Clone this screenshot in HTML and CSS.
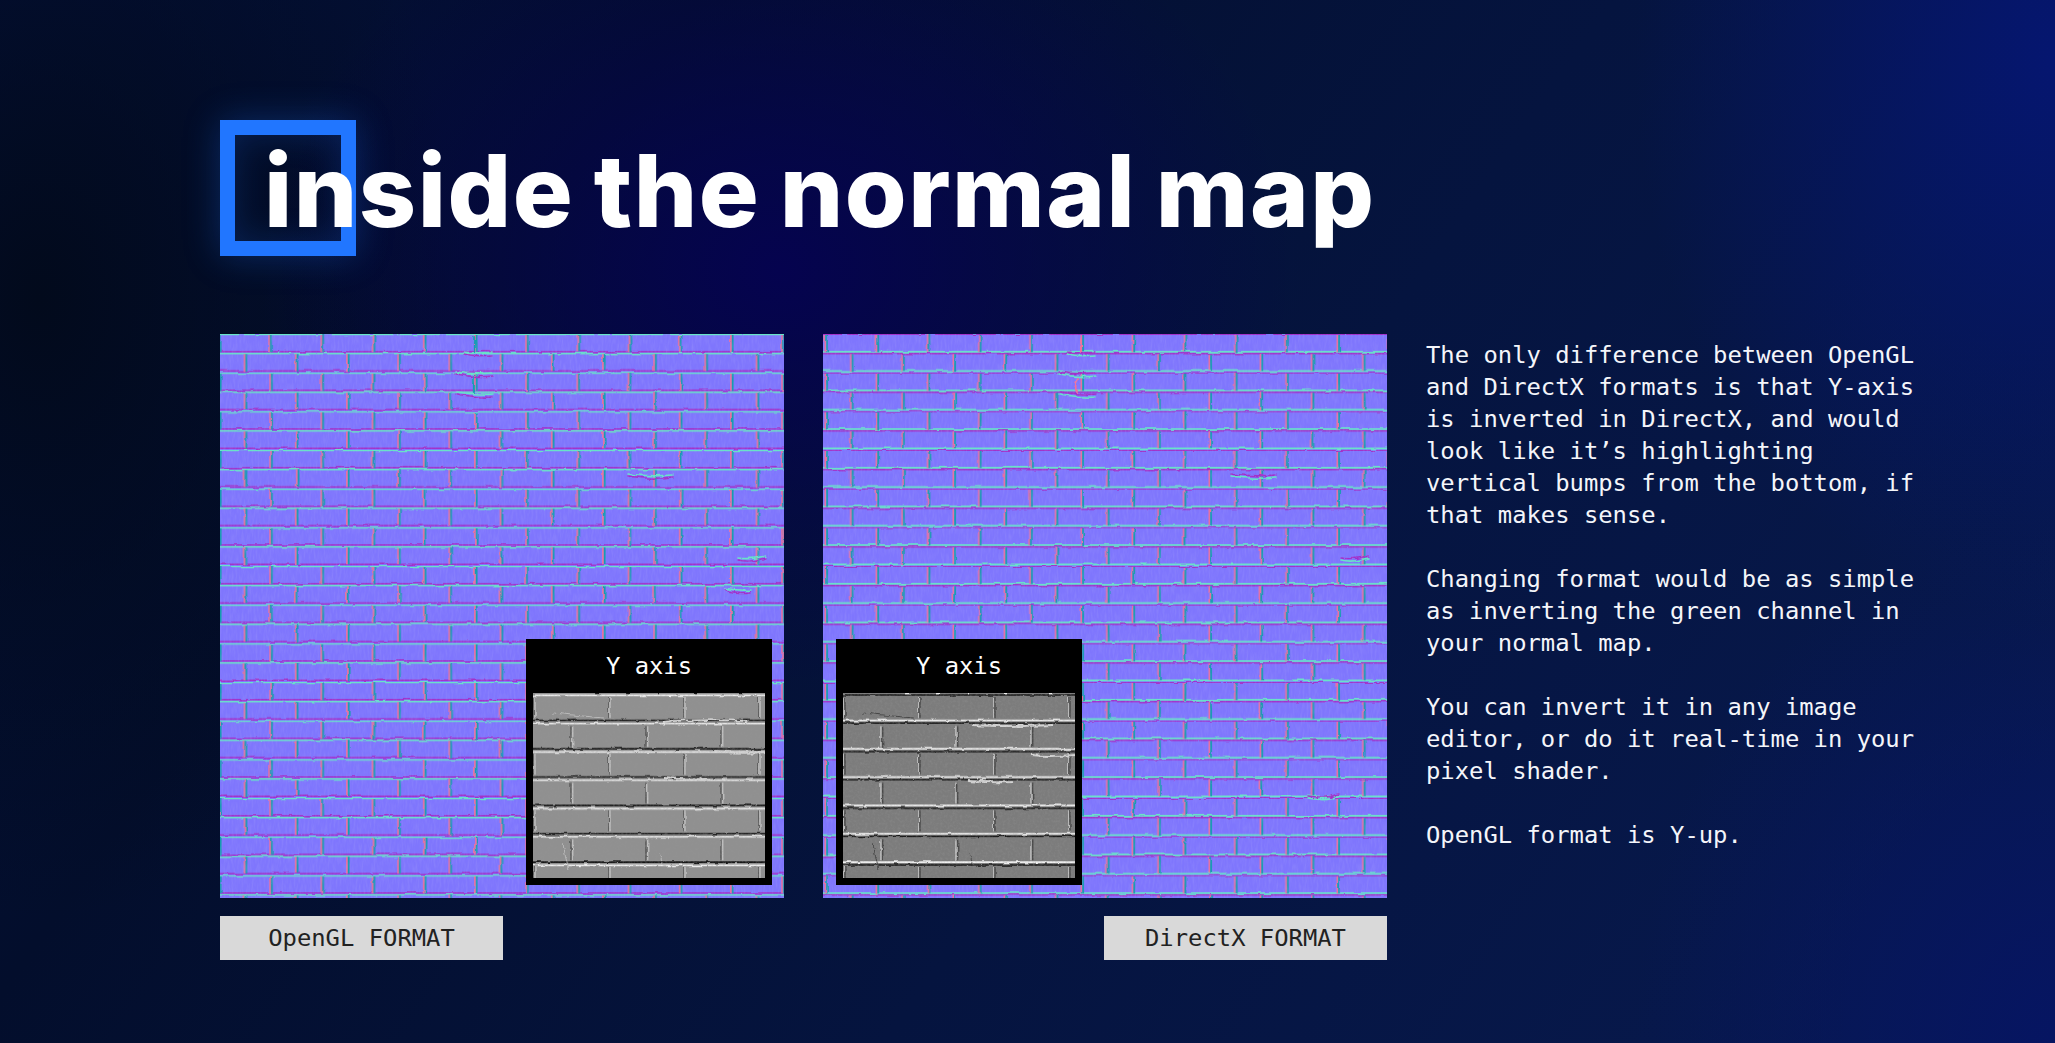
FILE: index.html
```html
<!DOCTYPE html>
<html lang="en">
<head>
<meta charset="utf-8">
<title>inside the normal map</title>
<link rel="stylesheet" href="styles.css">
</head>
<body>
<svg class="defs" aria-hidden="true">
  <defs>
    <filter id="rough" x="0" y="0" width="100%" height="100%">
      <feTurbulence type="fractalNoise" baseFrequency="0.07" numOctaves="3" seed="4" result="n"/>
      <feDisplacementMap in="SourceGraphic" in2="n" scale="3" xChannelSelector="R" yChannelSelector="G"/>
      <feGaussianBlur stdDeviation="0.3"/>
    </filter>
    <filter id="rough-blob" x="-5%" y="-5%" width="110%" height="110%">
      <feTurbulence type="fractalNoise" baseFrequency="0.12" numOctaves="3" seed="7" result="n"/>
      <feDisplacementMap in="SourceGraphic" in2="n" scale="5" xChannelSelector="R" yChannelSelector="G"/>
      <feGaussianBlur stdDeviation="0.4"/>
    </filter>
    <filter id="grain" x="0" y="0" width="100%" height="100%">
      <feTurbulence type="fractalNoise" baseFrequency="0.5 0.1" numOctaves="2" seed="9"/>
      <feColorMatrix values="0 0 0 0 0.42  0 0 0 0 0.4  0 0 0 0 0.95  1.4 0 0 0 -0.55"/>
    </filter>
    <filter id="grain-grey" x="0" y="0" width="100%" height="100%">
      <feTurbulence type="fractalNoise" baseFrequency="0.4" numOctaves="3" seed="3"/>
      <feColorMatrix values="0 0 0 0 0.3  0 0 0 0 0.3  0 0 0 0 0.3  1.5 0 0 0 -0.6"/>
    </filter>
    <filter id="rough-grey" x="0" y="0" width="100%" height="100%">
      <feTurbulence type="fractalNoise" baseFrequency="0.1" numOctaves="3" seed="12" result="n"/>
      <feDisplacementMap in="SourceGraphic" in2="n" scale="3" xChannelSelector="R" yChannelSelector="G"/>
      <feGaussianBlur stdDeviation="0.4"/>
    </filter>

    <pattern id="bricks-gl" width="51.2" height="38.67" patternUnits="userSpaceOnUse">
      <rect width="51.2" height="38.67" fill="#7f76fd"/>
      <path d="M0 17.7H51.2M0 37H51.2" stroke="#a32fc8" stroke-width="1.5"/>
      <path d="M0 19.6H51.2M0 .3H51.2" stroke="#66e6c6" stroke-width="1.7"/>
      <path d="M-1 1V18M50.2 1V18M24.6 20V37" stroke="#f0709c" stroke-width="1.8"/>
      <path d="M.7 1V18M51.9 1V18M26.3 20V37" stroke="#159cb0" stroke-width="1.8"/>
    </pattern>

    <pattern id="bricks-dx" width="51.2" height="38.67" patternUnits="userSpaceOnUse">
      <rect width="51.2" height="38.67" fill="#7f76fd"/>
      <path d="M0 17.7H51.2M0 37H51.2" stroke="#66e6c6" stroke-width="1.7"/>
      <path d="M0 19.6H51.2M0 .3H51.2" stroke="#a32fc8" stroke-width="1.5"/>
      <path d="M2.4 1V18M53.6 1V18M28 20V37" stroke="#f0709c" stroke-width="1.8"/>
      <path d="M4.1 1V18M55.3 1V18M29.7 20V37" stroke="#159cb0" stroke-width="1.8"/>
    </pattern>

    <pattern id="grey-gl" width="75" height="56.67" patternUnits="userSpaceOnUse">
      <rect width="75" height="56.67" fill="#909090"/>
      <path d="M0 27.4H75M0 55.8H75" stroke="#161616" stroke-width="1.5"/>
      <path d="M0 30.6H75M0 2.4H75" stroke="#ececec" stroke-width="1.6"/>
      <path d="M.2 4V25M37.9 33V54" stroke="#5c5c5c" stroke-width="1.5"/>
      <path d="M2 4V25M39.7 33V54" stroke="#c0c0c0" stroke-width="1.5"/>
    </pattern>

    <pattern id="grey-dx" width="75" height="56.67" patternUnits="userSpaceOnUse">
      <rect width="75" height="56.67" fill="#7c7c7c"/>
      <path d="M0 27.4H75M0 55.8H75" stroke="#f2f2f2" stroke-width="1.7"/>
      <path d="M0 30H75M0 2H75" stroke="#121212" stroke-width="1.4"/>
      <path d="M.2 4V25M37.9 33V54" stroke="#c0c0c0" stroke-width="1.5"/>
      <path d="M2 4V25M39.7 33V54" stroke="#484848" stroke-width="1.5"/>
    </pattern>
  </defs>
</svg>

<header class="head">
  <span class="mark"></span>
  <h1 class="title">inside the normal map</h1>
</header>

<main class="content">
  <figure class="fig">
    <div class="tile">
      <svg class="art" viewBox="0 0 564 564">
        <rect x="-10" y="-10" width="584" height="584" fill="url(#bricks-gl)" filter="url(#rough)"/>
        <g fill="none" stroke-linecap="round" filter="url(#rough-blob)">
          <path d="M244 18Q256 20 272 18M236 38Q256 41 272 39M236 58Q262 61 272 60M505 254Q520 257 530 256M518 224Q530 226 545 222M408 140Q430 143 452 141" stroke="#66e6c6" stroke-width="1.6"/>
          <path d="M244 20Q256 23 272 21M236 40Q256 44 272 42M236 60Q262 64 272 63M505 256Q520 260 530 258M518 226Q530 229 545 224M408 142Q430 146 452 143" stroke="#a32fc8" stroke-width="1.4"/>
          <path d="M254 2V18M254 42V58" stroke="#159cb0" stroke-width="2.2"/>
        </g>
        <rect width="564" height="564" filter="url(#grain)" opacity=".3"/>
      </svg>
      <div class="inset inset-right">
        <div class="inset-label">Y axis</div>
        <svg class="thumb" viewBox="0 0 232 185">
          <rect x="-6" y="-6" width="244" height="197" fill="url(#grey-gl)" filter="url(#rough-grey)"/>
          <g fill="none" filter="url(#rough-blob)">
            <path d="M130 29Q160 26 215 28M130 85Q150 87 176 86M180 58Q205 61 232 59" stroke="#d4d4d4" stroke-width="1.8"/>
            <path d="M30 150Q32 165 36 176M126 160Q128 168 134 174M20 20L70 25" stroke="#bcbcbc" stroke-width="1"/>
          </g>
          <rect width="232" height="185" filter="url(#grain-grey)" opacity=".45"/>
        </svg>
      </div>
    </div>
    <div class="caption">OpenGL FORMAT</div>
  </figure>

  <figure class="fig">
    <div class="tile">
      <svg class="art" viewBox="0 0 564 564">
        <rect x="-10" y="-10" width="584" height="584" fill="url(#bricks-dx)" filter="url(#rough)"/>
        <g fill="none" stroke-linecap="round" filter="url(#rough-blob)">
          <path d="M244 20Q256 23 272 21M236 40Q256 44 272 42M236 60Q262 64 272 63M486 464Q505 468 516 462M518 226Q530 229 545 224M408 142Q430 146 452 143" stroke="#66e6c6" stroke-width="1.6"/>
          <path d="M244 18Q256 20 272 18M236 38Q256 41 272 39M236 58Q262 61 272 60M486 462Q505 465 516 460M518 224Q530 226 545 222M408 140Q430 143 452 141" stroke="#a32fc8" stroke-width="1.4"/>
          <path d="M258 4V18M256 44Q250 52 254 58" stroke="#f0709c" stroke-width="2"/>
        </g>
        <rect width="564" height="564" filter="url(#grain)" opacity=".3"/>
      </svg>
      <div class="inset inset-left">
        <div class="inset-label">Y axis</div>
        <svg class="thumb" viewBox="0 0 232 185">
          <rect x="-6" y="-6" width="244" height="197" fill="url(#grey-dx)" filter="url(#rough-grey)"/>
          <g fill="none" filter="url(#rough-blob)">
            <path d="M130 32Q160 34 210 32M125 88Q150 90 170 89M188 62Q205 64 232 62" stroke="#d4d4d4" stroke-width="1.8"/>
            <path d="M30 150Q32 165 36 176M126 160Q128 168 134 174M20 20L70 25" stroke="#444" stroke-width="1"/>
          </g>
          <rect width="232" height="185" filter="url(#grain-grey)" opacity=".45"/>
        </svg>
      </div>
    </div>
    <div class="caption caption-right">DirectX FORMAT</div>
  </figure>

  <section class="notes">
    <p>The only difference between OpenGL<br>and DirectX formats is that Y-axis<br>is inverted in DirectX, and would<br>look like it’s highlighting<br>vertical bumps from the bottom, if<br>that makes sense.</p>
    <p>Changing format would be as simple<br>as inverting the green channel in<br>your normal map.</p>
    <p>You can invert it in any image<br>editor, or do it real-time in your<br>pixel shader.</p>
    <p>OpenGL format is Y-up.</p>
  </section>
</main>
</body>
</html>
```

FILE: styles.css
```css
* { box-sizing: border-box; }

html, body {
  margin: 0;
  width: 2055px;
  height: 1043px;
  overflow: hidden;
}

body {
  color: #fff;
  font-family: "DejaVu Sans Mono", monospace;
  background:
    radial-gradient(ellipse 520px 420px at 780px 270px, #05034f 0%, rgba(5, 3, 79, 0) 100%),
    radial-gradient(ellipse 420px 560px at 2055px 60px, #051670 0%, rgba(5, 22, 112, 0) 100%),
    radial-gradient(ellipse 420px 520px at 2055px 1043px, #061562 0%, rgba(6, 21, 98, 0) 100%),
    radial-gradient(ellipse 420px 620px at 40px 300px, #020a1c 0%, rgba(2, 10, 28, 0) 100%),
    linear-gradient(125deg, #03103a 0%, #030e2c 25%, #05143f 58%, #081a50 100%);
}

.defs {
  display: block;
  width: 0;
  height: 0;
}

.head {
  position: relative;
  height: 334px;
  padding: 133px 0 0 264px;
}

.mark {
  position: absolute;
  left: 220px;
  top: 120px;
  width: 136px;
  height: 136px;
  border: 15px solid #2176ff;
  box-shadow: 0 0 34px rgba(33, 118, 255, .28), inset 0 0 34px rgba(33, 118, 255, .2);
}

.title {
  position: relative;
  margin: 0;
  font: 800 100px/1.15 "Inter", sans-serif;
  letter-spacing: 1.5px;
  word-spacing: -4px;
  white-space: nowrap;
}

.content {
  display: grid;
  grid-template-columns: 564px 564px 1fr;
  column-gap: 39px;
  padding-left: 220px;
}

.fig {
  margin: 0;
  display: flex;
  flex-direction: column;
}

.tile {
  position: relative;
  width: 564px;
  height: 564px;
}

.art {
  display: block;
  width: 564px;
  height: 564px;
}

.inset {
  position: absolute;
  bottom: 13px;
  width: 246px;
  height: 246px;
  padding: 0 7px;
  background: #000;
  display: flex;
  flex-direction: column;
}

.inset-right { right: 12px; }
.inset-left { left: 13px; }

.inset-label {
  height: 54px;
  display: flex;
  align-items: center;
  justify-content: center;
  font-size: 23.85px;
}

.thumb {
  display: block;
  width: 232px;
  height: 185px;
}

.caption {
  align-self: flex-start;
  width: 283px;
  height: 44px;
  margin-top: 18px;
  display: flex;
  align-items: center;
  justify-content: center;
  background: #d9d9d9;
  color: #222;
  font-size: 23.85px;
}

.caption-right { align-self: flex-end; }

.notes {
  padding-top: 5px;
  font-size: 23.85px;
  line-height: 32px;
  color: #f4f5fa;
}

.notes p {
  margin: 0 0 32px;
  white-space: nowrap;
}
```
